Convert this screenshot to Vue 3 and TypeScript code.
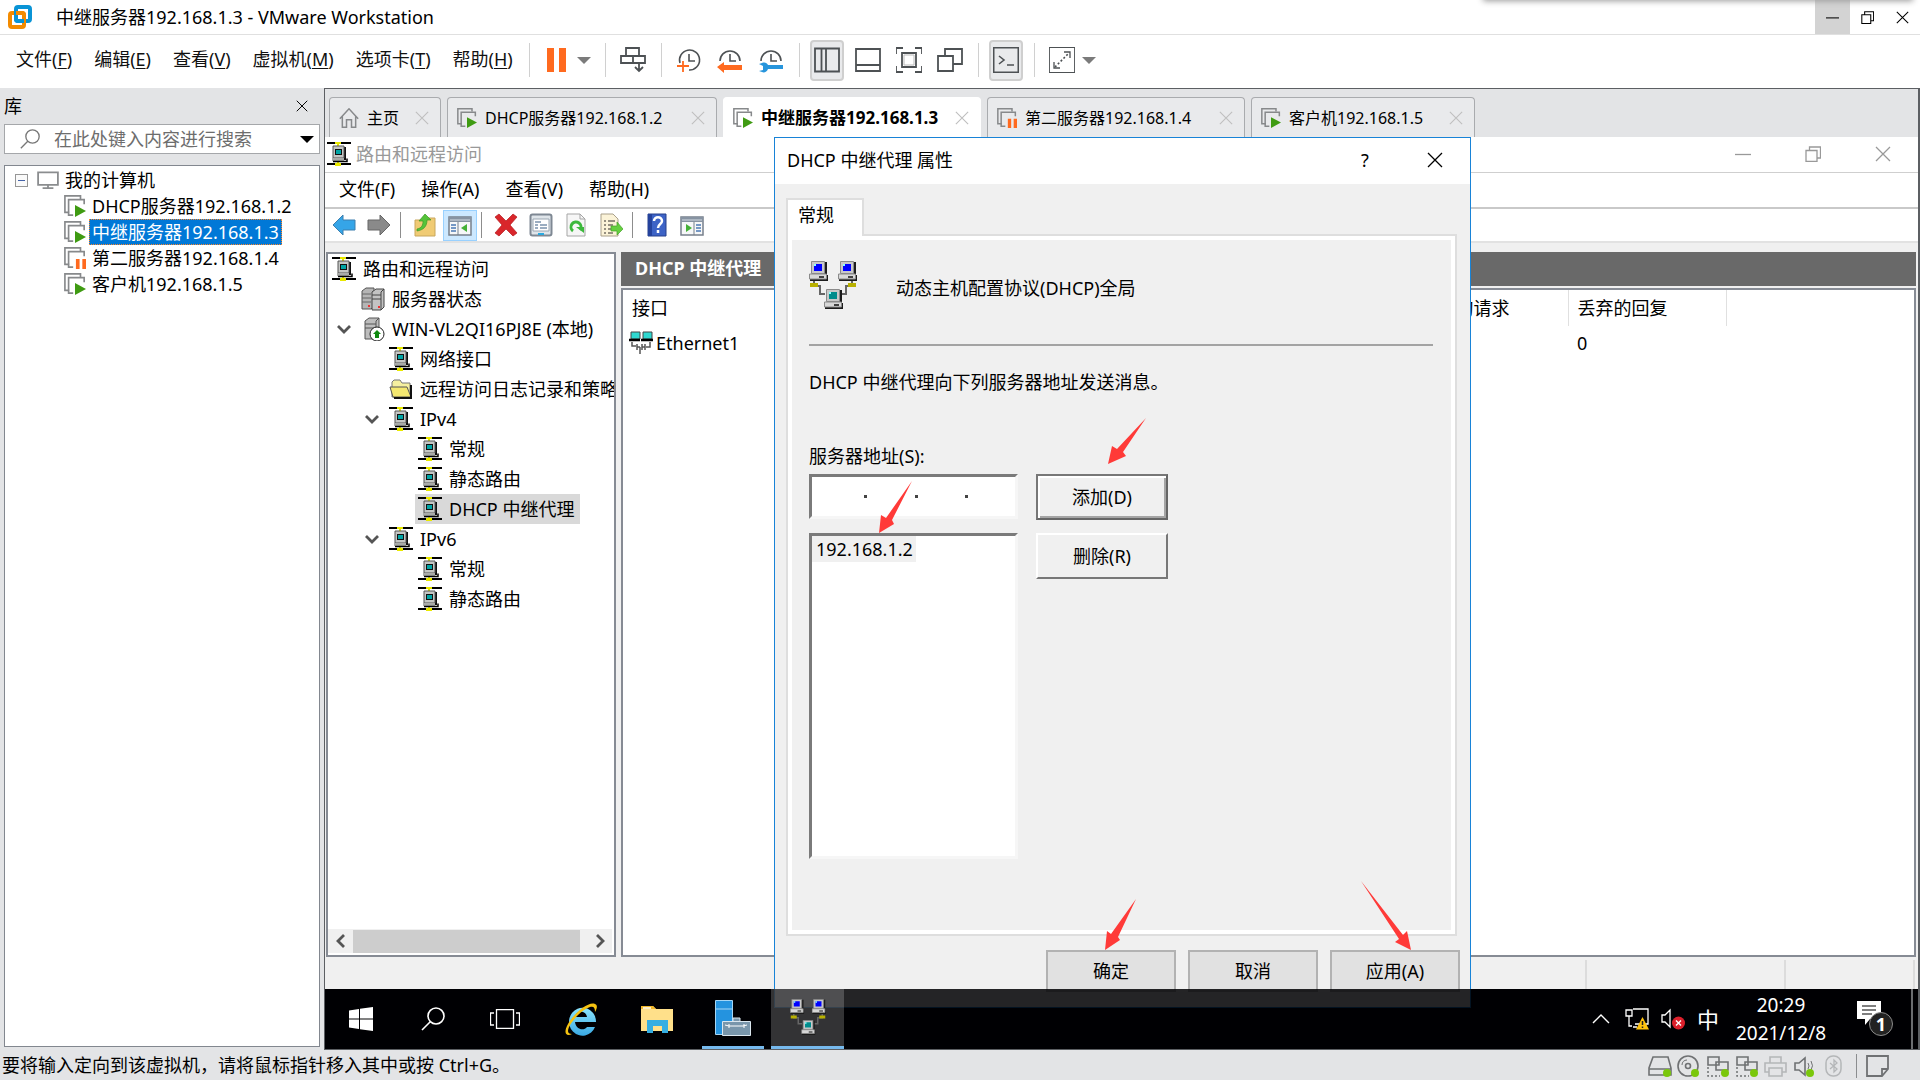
<script setup lang="ts">
interface MenuEntry { label: string; key: string }
interface MachineTab { name: string; icon: string; width: number; active?: boolean }
interface Machine { name: string; icon: string; selected?: boolean }
interface ConsoleNode { name: string; icon: string; level: number; open?: boolean; selected?: boolean }

const hostMenu: MenuEntry[] = [
  { label: '文件', key: 'F' },
  { label: '编辑', key: 'E' },
  { label: '查看', key: 'V' },
  { label: '虚拟机', key: 'M' },
  { label: '选项卡', key: 'T' },
  { label: '帮助', key: 'H' },
]

const hostTools: { icons: string[]; pressed?: string; caret?: boolean }[] = [
  { icons: ['pause'], caret: true },
  { icons: ['send-keys'] },
  { icons: ['snap-add', 'snap-back', 'snap-manage'] },
  { icons: ['view-side', 'view-bottom', 'view-fit', 'view-multi'], pressed: 'view-side' },
  { icons: ['console'], pressed: 'console' },
  { icons: ['stretch'], caret: true },
]

const machines: Machine[] = [
  { name: 'DHCP服务器192.168.1.2', icon: 'vm-on' },
  { name: '中继服务器192.168.1.3', icon: 'vm-on', selected: true },
  { name: '第二服务器192.168.1.4', icon: 'vm-paused' },
  { name: '客户机192.168.1.5', icon: 'vm-on' },
]

const tabs: MachineTab[] = [
  { name: '主页', icon: 'home', width: 112 },
  { name: 'DHCP服务器192.168.1.2', icon: 'vm-on', width: 270 },
  { name: '中继服务器192.168.1.3', icon: 'vm-on', width: 258, active: true },
  { name: '第二服务器192.168.1.4', icon: 'vm-paused', width: 258 },
  { name: '客户机192.168.1.5', icon: 'vm-on', width: 224 },
]

const guestMenu = ['文件(F)', '操作(A)', '查看(V)', '帮助(H)']

const guestTools: { icons: string[]; pressed?: string }[] = [
  { icons: ['back', 'forward'] },
  { icons: ['folder-up', 'pane-tree'], pressed: 'pane-tree' },
  { icons: ['delete', 'properties', 'refresh', 'export'] },
  { icons: ['help', 'pane-action'] },
]

const nodes: ConsoleNode[] = [
  { name: '路由和远程访问', icon: 'rras', level: 0 },
  { name: '服务器状态', icon: 'servers', level: 1 },
  { name: 'WIN-VL2QI16PJ8E (本地)', icon: 'server-up', level: 1, open: true },
  { name: '网络接口', icon: 'rras', level: 2 },
  { name: '远程访问日志记录和策略', icon: 'folder', level: 2 },
  { name: 'IPv4', icon: 'rras', level: 2, open: true },
  { name: '常规', icon: 'rras', level: 3 },
  { name: '静态路由', icon: 'rras', level: 3 },
  { name: 'DHCP 中继代理', icon: 'rras', level: 3, selected: true },
  { name: 'IPv6', icon: 'rras', level: 2, open: true },
  { name: '常规', icon: 'rras', level: 3 },
  { name: '静态路由', icon: 'rras', level: 3 },
]

const devices = ['disk', 'cd', 'net', 'net', 'printer', 'sound', 'bluetooth']
</script>

<template>
  <div class="app">
    <svg class="defs" aria-hidden="true">
      <symbol id="logo" viewBox="0 0 24 24">
        <rect x="8" y="2" width="14" height="14" rx="2" fill="none" stroke="#0a94d6" stroke-width="4" />
        <rect x="2" y="8" width="14" height="14" rx="2" fill="none" stroke="#f38b00" stroke-width="4" />
        <path d="M8 6v8q0 2 2 2h6" fill="none" stroke="#0a94d6" stroke-width="4" />
        <path d="M8 8h6q2 0 2 2v2" fill="none" stroke="#f38b00" stroke-width="4" />
      </symbol>
      <symbol id="x" viewBox="0 0 16 16"><path d="M1 1l14 14M15 1L1 15" fill="none" stroke="currentColor" stroke-width="1.3" /></symbol>
      <symbol id="min" viewBox="0 0 16 16"><path d="M0 8.5h16" stroke="currentColor" stroke-width="1.3" /></symbol>
      <symbol id="restore" viewBox="0 0 16 16"><path d="M1 4.5h11v11H1zM4.5 4.5V1h11v11H12" fill="none" stroke="currentColor" stroke-width="1.3" /></symbol>
      <symbol id="pause" viewBox="0 0 26 26"><path d="M3 1h7v24H3zM15 1h7v24h-7z" fill="#ff6a1f" /></symbol>
      <symbol id="send-keys" viewBox="0 0 26 26"><path d="M6 1h13v8H6zM1 9h12v7H1zM13 9h12v7H13zM19 16v8M15 20l4 4 4-4" fill="none" stroke="#4d5154" stroke-width="1.8" /></symbol>
      <symbol id="clock" viewBox="0 0 26 26"><path d="M4 16a10 10 0 1 1 9 7M13 7v7h6" fill="none" stroke="#4d5154" stroke-width="1.6" /></symbol>
      <symbol id="snap-add" viewBox="0 0 26 26"><use href="#clock" /><path d="M1 19h12M7 14v11" stroke="#ff6a1f" stroke-width="1.8" /></symbol>
      <symbol id="snap-back" viewBox="0 0 26 26"><path d="M3 14a10 10 0 1 1 20 0M13 7v7h6" fill="none" stroke="#4d5154" stroke-width="1.6" /><path d="M0 20l7-5v3h18v5H7v3z" fill="#ff6a1f" /></symbol>
      <symbol id="snap-manage" viewBox="0 0 26 26"><path d="M3 14a10 10 0 1 1 20 0M13 7v7h6" fill="none" stroke="#4d5154" stroke-width="1.6" /><path d="M1 17l3-1c3-1 5 0 6 2h15v4H10c-1 3-4 4-6 3l-3-1 4-1v-4z" fill="#2795dc" /></symbol>
      <symbol id="view-side" viewBox="0 0 26 26"><path d="M1 1.5h24v23H1zM7.5 1v24M12 1v24" fill="none" stroke="#4d5154" stroke-width="1.8" /></symbol>
      <symbol id="view-bottom" viewBox="0 0 26 26"><path d="M1 2h24v22H1zM1 18h24" fill="none" stroke="#4d5154" stroke-width="1.8" /></symbol>
      <symbol id="view-fit" viewBox="0 0 26 26"><path d="M0 7V1h7M19 1h7v6M26 19v6h-7M7 25H0v-6M6 6h14v14H6z" fill="none" stroke="#4d5154" stroke-width="1.8" /><path d="M8 8h10v10H8z" fill="#fff" stroke="#bbb" /></symbol>
      <symbol id="view-multi" viewBox="0 0 26 26"><path d="M1 9h15v15H1zM8 9V2h17v15h-9" fill="none" stroke="#4d5154" stroke-width="1.8" /></symbol>
      <symbol id="console" viewBox="0 0 26 26"><path d="M0 0h26v26H0z" fill="none" stroke="#4d5154" stroke-width="3" /><path d="M6 9l5 4-5 4M14 18h7" fill="none" stroke="#4d5154" stroke-width="1.6" /></symbol>
      <symbol id="stretch" viewBox="0 0 26 26"><path d="M0 0h26v26H0z" fill="none" stroke="#4d5154" stroke-width="1.8" /><path d="M15 5h6v6M11 21H5v-6" fill="none" stroke="#4d5154" stroke-width="1.3" /><path d="M6 20L20 6" stroke="#4d5154" stroke-width="1.6" stroke-dasharray="2 2" /></symbol>
      <symbol id="search" viewBox="0 0 24 24"><path d="M15 1a8 8 0 1 1 0 16a8 8 0 1 1 0-16M9 15L1 23" fill="none" stroke="currentColor" stroke-width="1.6" /></symbol>
      <symbol id="monitor" viewBox="0 0 24 20"><path d="M1 1.5h22v14H1zM12 16v3M6 19h12" fill="none" stroke="#8b8d8f" stroke-width="2" /></symbol>
      <symbol id="vm" viewBox="0 0 24 24"><path d="M6 19H1V1h17v3M10 22H5V5h17v5" fill="none" stroke="#87898b" stroke-width="1.8" /></symbol>
      <symbol id="vm-on" viewBox="0 0 24 24"><use href="#vm" /><path d="M12 11l12 6.5L12 24z" fill="#3f9b12" /></symbol>
      <symbol id="vm-paused" viewBox="0 0 24 24"><use href="#vm" /><path d="M13 13h4v11h-4zM20 13h4v11h-4z" fill="#ff6a1f" /></symbol>
      <symbol id="home" viewBox="0 0 24 24"><path d="M1 13L12 1l11 12M4 10v13h5v-9h6v9h5V10" fill="none" stroke="#87898b" stroke-width="1.8" /></symbol>

      <symbol id="rras" viewBox="0 0 24 24">
        <path d="M0 1h24M0 22h24" stroke="#000" stroke-width="2" />
        <path d="M8 0h6v2h-2v3h-2V2H8zM8 24h6v-3h-2v-2h-2v2H8z" fill="#e8e800" />
        <path d="M8 5h11v13H8z" fill="#111" />
        <path d="M6 4h11v12H6z" fill="#c4c6c4" stroke="#555" />
        <path d="M8 7h7v6H8z" fill="#111" /><path d="M9 8h5v4H9z" fill="#00a4a4" />
        <path d="M5 16h12v3H5z" fill="#a9aba9" /><path d="M6 19.5h14v-3" fill="none" stroke="#000" stroke-width="1.5" />
      </symbol>
      <symbol id="servers" viewBox="0 0 24 24">
        <path d="M1 4l4-3h8v18l-3 3H1z" fill="#b5b5b5" stroke="#555" /><path d="M1 7h9M1 11h9M1 15h9" stroke="#666" />
        <path d="M11 5l4-3h8v18l-3 3h-9z" fill="#c3c3c3" stroke="#444" /><path d="M11 8h9M11 12h9M20 5v18M20 5l3-3" stroke="#444" /><path d="M17 19h2v2h-2zM7 18h2v2H7z" fill="#e33" />
      </symbol>
      <symbol id="server-up" viewBox="0 0 24 24">
        <path d="M4 4l4-3h10v18l-3 3H4z" fill="#bdbdbd" stroke="#555" /><path d="M4 7h11M4 11h11M15 4v10M15 4l3-3" stroke="#555" />
        <circle cx="16" cy="17" r="7" fill="#fff" stroke="#222" /><path d="M16 13l4 4h-2v4h-4v-4h-2z" fill="#108a10" />
      </symbol>
      <symbol id="folder" viewBox="0 0 24 24"><path d="M3 20V5l2-2h6l2 3h8v14z" fill="#f5f0a0" stroke="#777" /><path d="M1 10h17l4 10H4z" fill="#f4e870" stroke="#555" /><path d="M22 8v13H5" fill="none" stroke="#111" stroke-width="2" /></symbol>
      <symbol id="nic" viewBox="0 0 24 24"><path d="M2 1h9v7H2zM14 1h9v7h-9z" fill="#2fd8d0" stroke="#444" /><path d="M0 9h11M12 9h12" stroke="#000" stroke-width="2.5" /><path d="M3 11v4h4M21 11v5h-4M8 13v6M8 16h3M13 13v6M16 13v6M11 16v7M13 16h3" fill="none" stroke="#555" stroke-width="1.5" /></symbol>
      <symbol id="back" viewBox="0 0 24 24"><path d="M1 12L11 2v5h12v10H11v5z" fill="#35a5e8" stroke="#3d7fae" /></symbol>
      <symbol id="forward" viewBox="0 0 24 24"><path d="M23 12L13 2v5H1v10h12v5z" fill="#8a8a8a" stroke="#666" /></symbol>
      <symbol id="folder-up" viewBox="0 0 24 24"><path d="M2 7h8l2-2h10v18H2z" fill="#f0cb74" stroke="#c9a75c" /><path d="M4 16c5-1 6-4 6-8H6l6-7 6 6h-4c0 7-4 10-10 11z" fill="#55c33a" stroke="#3a9a24" stroke-width=".7" /></symbol>
      <symbol id="pane" viewBox="0 0 24 24"><path d="M1 4h22v18H1z" fill="#f6f7f8" stroke="#77808c" stroke-width="1.5" /><path d="M1 4h22v5H1z" fill="#8793a2" /><path d="M2 7h20" stroke="#d5dce4" /></symbol>
      <symbol id="pane-tree" viewBox="0 0 24 24"><use href="#pane" /><path d="M10 9v13" stroke="#77808c" /><path d="M3 12h5M3 15h5M3 18h5" stroke="#4b79b4" stroke-width="1.5" /><path d="M19 11v8l-6-4z" fill="#44b036" /></symbol>
      <symbol id="pane-action" viewBox="0 0 24 24"><use href="#pane" /><path d="M14 9v13" stroke="#77808c" /><path d="M16 12h5M16 15h5M16 18h5" stroke="#4b79b4" stroke-width="1.5" /><path d="M6 11v8l6-4z" fill="#44b036" /></symbol>
      <symbol id="delete" viewBox="0 0 24 24"><path d="M1 4l4-3 7 7 7-7 4 3-7 8 7 8-4 3-7-7-7 7-4-3 7-8z" fill="#d9262b" stroke="#b3181c" stroke-width=".7" /></symbol>
      <symbol id="properties" viewBox="0 0 24 24"><rect x="1.5" y="1.5" width="21" height="21" rx="2" fill="#dfe5ea" stroke="#7e8893" stroke-width="2" /><path d="M4 6h16v12H4z" fill="#fff" stroke="#9aa6b2" /><path d="M6 9h6M6 12h3M11 12h7M6 15h3M11 15h7" stroke="#7b93ad" stroke-width="1.5" /><path d="M9 21h6" stroke="#29a9e0" stroke-width="2" /></symbol>
      <symbol id="refresh" viewBox="0 0 24 24"><path d="M3 1h13l5 5v17H3z" fill="#f6f6f6" stroke="#a5a5a5" /><path d="M16 1v5h5" fill="none" stroke="#a5a5a5" /><path d="M9 18a5 5 0 1 1 7-1" fill="none" stroke="#3cb83c" stroke-width="3" /><path d="M12 14h8v6z" fill="#3cb83c" /></symbol>
      <symbol id="export" viewBox="0 0 24 24"><path d="M2 1h12l5 5v17H2z" fill="#fbf3d8" stroke="#a9a08a" /><path d="M5 8h2M9 8h7M5 12h2M9 12h5M5 16h2M9 16h5M5 20h2M9 20h5" stroke="#767064" stroke-width="1.5" /><path d="M12 13h6v-4l6 7-6 6v-4h-6z" fill="#65cf3f" stroke="#45a02a" stroke-width=".7" /></symbol>
      <symbol id="help" viewBox="0 0 24 24"><path d="M3 1h18v22H3z" fill="#3d63c6" stroke="#27408c" /><path d="M3 1h4v22H3z" fill="#24429c" /><path d="M9 8c0-5 8-5 8 0 0 3-4 3-4 7M13 17v3" fill="none" stroke="#fff" stroke-width="2.5" /></symbol>
      <symbol id="chevron" viewBox="0 0 14 10"><path d="M1 2l6 6 6-6" fill="none" stroke="#555" stroke-width="2.8" /></symbol>
      <symbol id="tray-up" viewBox="0 0 18 12"><path d="M1 10l8-8 8 8" fill="none" stroke="#fff" stroke-width="1.4" /></symbol>

      <symbol id="pc" viewBox="0 0 19 20">
        <path d="M4 1h14v13H4z" fill="#1c1c1c" /><path d="M2.500 .5h13v12h-13z" fill="#c9c9c9" stroke="#8a8a8a" />
        <path d="M1 14h18v6H1z" fill="#1c1c1c" /><path d="M.5 13h17v5H.5z" fill="#d8d8d8" stroke="#8a8a8a" /><path d="M10 16h5" stroke="#111" stroke-width="1.5" />
      </symbol>
      <symbol id="dhcp" viewBox="0 0 48 48">
        <path d="M5 20v5h6v8h5M43 20v5h-6v8h-5" fill="none" stroke="#666" stroke-width="2" />
        <path d="M1 22h8v4H1zM39 22h8v4h-8z" fill="#b8b000" />
        <use href="#pc" x="0" y="0" width="19" height="20" /><use href="#pc" x="29" y="0" width="19" height="20" /><use href="#pc" x="15" y="28" width="19" height="20" />
        <path d="M5 3h8v7H5zM34 3h8v7h-8z" fill="#00f" /><path d="M20 31h8v7h-8z" fill="#008c8c" /><path d="M5 3h2v2H5zM34 3h2v2h-2zM20 31h2v2h-2z" fill="#8ff" />
      </symbol>
      <symbol id="windows" viewBox="0 0 24 24"><path d="M0 3.5L10 2v9.5H0zM11 1.8L24 0v11.5H11zM0 12.5h10V22L0 20.5zM11 12.5h13V24l-13-1.8z" fill="#fff" /></symbol>
      <symbol id="task-view" viewBox="0 0 30 20"><path d="M6.5 .5h17v19h-17zM4 4H.5v12H4M26 4h3.5v12H26" fill="none" stroke="#fff" stroke-width="1.3" /></symbol>
      <symbol id="ie" viewBox="0 0 34 34">
        <defs><linearGradient id="ieb" x2="0" y2="1"><stop offset="0" stop-color="#8ce4fc" /><stop offset="1" stop-color="#3aa9e4" /></linearGradient></defs>
        <path d="M11 20h21a13.5 14 0 1 0-1 5h-8c-3 4-11 3-12-5zM11 15c1-7 11-7 12 0z" fill="url(#ieb)" fill-rule="evenodd" />
        <path d="M8 32C2 35-1 31 4 22 10 11 25-1 31 2c3 1 2 5 0 8 0-4-1-6-5-5C19 7 9 17 5 25c-2 5-1 7 3 7z" fill="#f5c211" />
      </symbol>
      <symbol id="explorer" viewBox="0 0 34 28"><path d="M1 1h12l3 3h17v22H1z" fill="#ffe08a" /><path d="M1 1h12l3 3H1z" fill="#f2b92c" /><path d="M3 3h8" stroke="#fff" stroke-width="1.5" /><path d="M7 28V15h21v13h-6v-7h-9v7z" fill="#35aee2" /></symbol>
      <symbol id="server-manager" viewBox="0 0 36 36"><path d="M.5 .5h17v34H.5z" fill="#2493df" stroke="#a5d6f5" /><path d="M1 9h16" stroke="#a5d6f5" /><path d="M18 21v-3h7v3M7.5 21.5h28v14h-28z" fill="#7996ab" stroke="#dbe7ef" /><path d="M10 25l4 1h14l4-1M14 24v4M29 24v4" fill="none" stroke="#fff" /></symbol>
      <symbol id="tray-net" viewBox="0 0 24 22"><path d="M8 1h15v15H10M1 2h6v6H1zM4 8v10h3M12 19H8" fill="none" stroke="#fff" stroke-width="1.3" /><path d="M17.5 9L24 21.5H11z" fill="#ffc20e" /><path d="M17.5 13v4M17.5 18.5v1.5" stroke="#222" stroke-width="1.5" /></symbol>
      <symbol id="tray-sound" viewBox="0 0 24 22"><path d="M1 7h3l5-5v17l-5-5H1z" fill="none" stroke="#fff" stroke-width="1.3" /><circle cx="17.5" cy="15" r="6.5" fill="#dc1f2b" /><path d="M15 12.5l5 5M20 12.5l-5 5" stroke="#fff" stroke-width="1.4" /></symbol>
      <symbol id="notice" viewBox="0 0 26 26"><path d="M0 0h24v18H13l-5 6v-6H0z" fill="#fff" /><path d="M5 5h14M5 9h14M5 13h10" stroke="#000" stroke-width="1.2" /></symbol>

      <symbol id="disk" viewBox="0 0 24 22"><path d="M5 2h15l3 11v7H1v-7zM1 14h22" fill="none" stroke="#6f7173" stroke-width="1.6" /><circle cx="19" cy="18" r="4" fill="#7ac70c" /></symbol>
      <symbol id="cd" viewBox="0 0 24 22"><circle cx="11" cy="11" r="10" fill="none" stroke="#6f7173" stroke-width="1.6" /><circle cx="11" cy="11" r="2.5" fill="none" stroke="#6f7173" stroke-width="1.6" /><path d="M5 10c0-3 2-5 5-5" fill="none" stroke="#6f7173" /><circle cx="18" cy="18" r="4" fill="#7ac70c" /></symbol>
      <symbol id="net" viewBox="0 0 24 22"><path d="M2 2h11v8H2zM10 7h12v8H10z" fill="#e3e4e6" stroke="#6f7173" stroke-width="1.6" /><path d="M2 12v9h12" fill="none" stroke="#6f7173" stroke-width="1.5" stroke-dasharray="2 2" /><circle cx="19" cy="18" r="4" fill="#7ac70c" /></symbol>
      <symbol id="printer" viewBox="0 0 24 22"><path d="M6 8V2h11v6M5 17H1V8h21v9h-4M5 13h13v8H5z" fill="none" stroke="#b4b6b8" stroke-width="1.6" /></symbol>
      <symbol id="sound" viewBox="0 0 24 22"><path d="M2 8h4l6-5v17l-6-5H2z" fill="none" stroke="#6f7173" stroke-width="1.6" /><path d="M15 8q2 3 0 6M18 6q3 5 0 9" fill="none" stroke="#6f7173" /><circle cx="17" cy="18" r="4" fill="#7ac70c" /></symbol>
      <symbol id="bluetooth" viewBox="0 0 24 22"><rect x="4" y="1" width="15" height="20" rx="7" fill="none" stroke="#b4b6b8" stroke-width="1.5" /><path d="M8 8l7 6-3 3V5l3 3-7 6" fill="none" stroke="#b4b6b8" stroke-width="1.3" /></symbol>
      <symbol id="note" viewBox="0 0 24 22"><path d="M1 1h21v13l-6 7H1zM22 14h-6v7" fill="none" stroke="#6f7173" stroke-width="1.8" /></symbol>
    </svg>

    <header class="title-bar">
      <svg class="logo"><use href="#logo" /></svg>
      <h1>中继服务器192.168.1.3 - VMware Workstation</h1>
      <div class="window-buttons">
        <button class="hot" aria-label="最小化"><svg><use href="#min" /></svg></button>
        <button aria-label="还原"><svg><use href="#restore" /></svg></button>
        <button aria-label="关闭"><svg><use href="#x" /></svg></button>
      </div>
      <div class="top-shadow"></div>
    </header>

    <div class="menu-bar">
      <nav>
        <button v-for="m in hostMenu" :key="m.key">{{ m.label }}(<u>{{ m.key }}</u>)</button>
      </nav>
      <div v-for="(g, i) in hostTools" :key="i" class="tool-group">
        <button v-for="icon in g.icons" :key="icon" class="tool" :class="{ pressed: g.pressed === icon }" :aria-label="icon">
          <svg><use :href="'#' + icon" /></svg>
        </button>
        <button v-if="g.caret" class="drop" aria-label="更多"><i class="caret"></i></button>
      </div>
    </div>

    <div class="workspace">
      <aside class="library">
        <div class="library-head">
          <h2>库</h2>
          <button aria-label="关闭库"><svg><use href="#x" /></svg></button>
        </div>
        <div class="search">
          <svg><use href="#search" /></svg>
          <input type="text" placeholder="在此处键入内容进行搜索" aria-label="搜索" />
          <button aria-label="搜索选项"><i class="caret"></i></button>
        </div>
        <div class="machine-tree">
          <div class="root">
            <i class="expander"></i>
            <svg><use href="#monitor" /></svg>
            <span>我的计算机</span>
          </div>
          <ul>
            <li v-for="m in machines" :key="m.name">
              <svg><use :href="'#' + m.icon" /></svg>
              <span :class="{ selected: m.selected }">{{ m.name }}</span>
            </li>
          </ul>
        </div>
      </aside>

      <main class="viewer">
        <div class="tabs">
          <div v-for="t in tabs" :key="t.name" class="tab" :class="{ active: t.active }" :style="{ width: t.width + 'px' }">
            <svg class="tab-icon"><use :href="'#' + t.icon" /></svg>
            <span>{{ t.name }}</span>
            <button aria-label="关闭选项卡"><svg><use href="#x" /></svg></button>
          </div>
        </div>

        <div class="guest">
          <section class="console">
            <header class="console-title">
              <svg><use href="#rras" /></svg>
              <h2>路由和远程访问</h2>
              <div class="console-buttons">
                <button aria-label="最小化"><svg><use href="#min" /></svg></button>
                <button aria-label="还原"><svg><use href="#restore" /></svg></button>
                <button aria-label="关闭"><svg><use href="#x" /></svg></button>
              </div>
            </header>
            <nav class="console-menu">
              <button v-for="m in guestMenu" :key="m">{{ m }}</button>
            </nav>
            <div class="console-tools">
              <div v-for="(g, i) in guestTools" :key="i" class="console-group">
                <button v-for="icon in g.icons" :key="icon" :class="{ pressed: g.pressed === icon }" :aria-label="icon">
                  <svg><use :href="'#' + icon" /></svg>
                </button>
              </div>
            </div>
            <div class="console-body">
              <div class="tree-pane">
                <ul>
                  <li v-for="(n, i) in nodes" :key="i" :class="'level-' + n.level">
                    <svg v-if="n.open" class="chevron"><use href="#chevron" /></svg>
                    <span class="node" :class="{ selected: n.selected }">
                      <svg><use :href="'#' + n.icon" /></svg>
                      <span>{{ n.name }}</span>
                    </span>
                  </li>
                </ul>
                <div class="scroll-bar">
                  <button class="to-left" aria-label="向左滚动"><svg><use href="#chevron" /></svg></button>
                  <div class="thumb"></div>
                  <button class="to-right" aria-label="向右滚动"><svg><use href="#chevron" /></svg></button>
                </div>
              </div>
              <div class="detail-pane">
                <h3>DHCP 中继代理</h3>
                <div class="detail-box">
                  <table>
                    <colgroup><col class="c-name" /><col class="c-wide" /><col class="c-data" /><col class="c-data" /><col /></colgroup>
                    <thead><tr><th>接口</th><th></th><th>丢弃的请求</th><th>丢弃的回复</th><th></th></tr></thead>
                    <tbody>
                      <tr><td><svg><use href="#nic" /></svg>Ethernet1</td><td></td><td></td><td>0</td><td></td></tr>
                    </tbody>
                  </table>
                </div>
              </div>
            </div>
            <footer class="console-status"><i></i><i></i><i></i></footer>
          </section>

          <section class="dialog" role="dialog" aria-labelledby="dialog-title">
            <header>
              <h2 id="dialog-title">DHCP 中继代理 属性</h2>
              <button aria-label="帮助">?</button>
              <button aria-label="关闭"><svg><use href="#x" /></svg></button>
            </header>
            <button class="sheet-tab">常规</button>
            <div class="sheet">
              <div class="intro">
                <svg><use href="#dhcp" /></svg>
                <p>动态主机配置协议(DHCP)全局</p>
              </div>
              <p class="hint">DHCP 中继代理向下列服务器地址发送消息。</p>
              <label for="octet-1">服务器地址(S):</label>
              <div class="row">
                <div class="ip-field">
                  <input id="octet-1" type="text" maxlength="3" /><b></b>
                  <input type="text" maxlength="3" aria-label="第二段" /><b></b>
                  <input type="text" maxlength="3" aria-label="第三段" /><b></b>
                  <input type="text" maxlength="3" aria-label="第四段" />
                </div>
                <button class="classic default">添加(D)</button>
              </div>
              <div class="row">
                <ul class="address-list"><li>192.168.1.2</li></ul>
                <button class="classic">删除(R)</button>
              </div>
            </div>
            <footer>
              <button>确定</button>
              <button>取消</button>
              <button>应用(A)</button>
            </footer>
          </section>

          <svg class="arrows" viewBox="0 0 700 900" aria-hidden="true">
            <g fill="#ff3a38">
              <path d="M334 327L338 309L343 312L372 281L349 315L352 319Z" />
              <path d="M105 396L107 378L112 381L138 344L118 383L120 387Z" />
              <path d="M331 813L333 794L337 797L362 762L344 800L346 803Z" />
              <path d="M637 813L633 794L629 798L587 744L625 802L621 805Z" />
            </g>
          </svg>

          <footer class="taskbar">
            <button aria-label="开始"><svg class="s24"><use href="#windows" /></svg></button>
            <button aria-label="搜索"><svg class="s24"><use href="#search" /></svg></button>
            <button aria-label="任务视图"><svg class="s-view"><use href="#task-view" /></svg></button>
            <div class="apps">
              <button aria-label="Internet Explorer"><svg class="s34"><use href="#ie" /></svg></button>
              <button aria-label="文件资源管理器"><svg class="s34"><use href="#explorer" /></svg></button>
              <button class="running" aria-label="服务器管理器"><svg class="s36"><use href="#server-manager" /></svg></button>
              <button class="current" aria-label="路由和远程访问"><svg class="s36"><use href="#dhcp" /></svg></button>
            </div>
            <div class="tray">
              <svg class="tray-up"><use href="#tray-up" /></svg>
              <svg class="tray-icon"><use href="#tray-net" /></svg>
              <svg class="tray-icon"><use href="#tray-sound" /></svg>
              <span class="ime">中</span>
              <time><span>20:29</span><span>2021/12/8</span></time>
              <div class="notice"><svg><use href="#notice" /></svg><b>1</b></div>
            </div>
          </footer>
        </div>
      </main>
    </div>

    <footer class="status-bar">
      <span>要将输入定向到该虚拟机，请将鼠标指针移入其中或按 Ctrl+G。</span>
      <div class="devices">
        <svg v-for="(d, i) in devices" :key="i"><use :href="'#' + d" /></svg>
        <i></i>
        <svg><use href="#note" /></svg>
      </div>
    </footer>
  </div>
</template>

<style>
body {
  background: #e3e4e6;
}
</style>

<style scoped>
* {
  box-sizing: border-box;
}
.app {
  display: flex;
  flex-direction: column;
  min-height: 100vh;
  font: 18px/24px "Noto Sans", "Noto Sans CJK SC", sans-serif;
  color: #000;
  overflow: hidden;
}
.defs {
  position: absolute;
  width: 0;
  height: 0;
}
h1, h2, h3, p, ul {
  margin: 0;
  padding: 0;
  font-size: inherit;
  font-weight: 400;
  list-style: none;
}
button {
  padding: 0;
  border: 0;
  background: none;
  font: inherit;
  color: inherit;
  display: flex;
  align-items: center;
  justify-content: center;
  white-space: nowrap;
  flex: none;
}
svg {
  display: block;
  flex: none;
  overflow: visible;
}
.caret {
  border: 7px solid transparent;
  border-top-color: currentColor;
  border-bottom: 0;
}

/* host window frame */
.title-bar {
  position: relative;
  display: flex;
  align-items: center;
  height: 34px;
  padding-left: 8px;
  gap: 24px;
  background: #fff;
}
.logo {
  width: 24px;
  height: 24px;
}
.title-bar h1 {
  flex: 1;
  line-height: 34px;
}
.window-buttons {
  display: flex;
  height: 34px;
}
.window-buttons button {
  width: 35px;
}
.window-buttons svg {
  width: 13px;
  height: 13px;
}
.window-buttons .hot {
  background: #d3d3d3;
}
.top-shadow {
  position: absolute;
  top: -8px;
  right: 8px;
  width: 428px;
  height: 8px;
  box-shadow: 0 0 6px 1px #999;
}
.menu-bar {
  display: flex;
  align-items: center;
  height: 54px;
  padding-bottom: 3px;
  border-top: 1px solid #e0e0e0;
  background: #fff;
  color: #111;
}
.menu-bar nav {
  display: flex;
  gap: 22px;
  width: 529px;
  padding: 0 0 2px 16px;
}
.menu-bar u {
  text-underline-offset: 2px;
}
.tool-group {
  display: flex;
  align-items: center;
  gap: 7px;
  height: 34px;
  padding: 0 11px 0 10px;
  border-left: 1px solid #d0d0d0;
}
.tool {
  width: 34px;
  height: 41px;
}
.tool svg {
  width: 26px;
  height: 26px;
}
.tool.pressed {
  border: 2px solid #cfcfcf;
  border-radius: 4px;
  background: #e9eaec;
}
.drop {
  width: 20px;
  height: 34px;
  margin-left: -7px;
  color: #7b7b7b;
}
.workspace {
  display: flex;
  flex: 1;
  background: #e3e4e6;
}

/* library */
.library {
  display: flex;
  flex-direction: column;
  width: 324px;
  padding: 0 4px 3px;
}
.library-head {
  display: flex;
  align-items: center;
  justify-content: space-between;
  height: 36px;
  padding-right: 12px;
}
.library-head svg {
  width: 12px;
  height: 12px;
}
.search {
  display: flex;
  align-items: center;
  height: 30px;
  margin-bottom: 11px;
  border: 1px solid #a5a7aa;
  background: #fff;
}
.search svg {
  width: 20px;
  height: 20px;
  margin: 0 14px 0 15px;
  color: #777;
}
.search input {
  flex: 1;
  min-width: 0;
  padding: 0;
  border: 0;
  background: none;
  font: inherit;
  outline: 0;
}
.search input::placeholder {
  color: #6d6d6d;
  opacity: 1;
}
.search button {
  width: 24px;
}
.machine-tree {
  flex: 1;
  padding: 1px 0 0 10px;
  border: 1px solid #82878f;
  background: #fff;
}
.machine-tree .root {
  display: flex;
  align-items: center;
  height: 26px;
}
.expander {
  display: flex;
  align-items: center;
  width: 13px;
  height: 13px;
  padding: 0 2px;
  border: 1px solid #969696;
  background: #fafafa;
}
.expander::before {
  content: "";
  width: 100%;
  height: 1px;
  background: #4463a8;
}
.root svg {
  width: 22px;
  height: 18px;
  margin: 0 6px 0 9px;
}
.machine-tree li {
  display: flex;
  align-items: center;
  height: 26px;
  padding-left: 49px;
  gap: 3px;
}
.machine-tree li svg {
  width: 22px;
  height: 22px;
}
.machine-tree li span {
  padding: 0 2px;
  border: 1px solid transparent;
}
.machine-tree .selected {
  background: #0078d7;
  border: 1px dotted #ff8728;
  color: #fff;
}

/* machine tabs */
.viewer {
  display: flex;
  flex-direction: column;
  flex: 1;
  min-width: 0;
  border: 1px solid #5c5f63;
  border-width: 1px 2px 1px 1px;
}
.tabs {
  display: flex;
  align-items: flex-end;
  gap: 6px;
  height: 48px;
  padding-left: 4px;
  font-size: 16px;
}
.tab {
  display: flex;
  align-items: center;
  height: 40px;
  padding: 0 11px 0 8px;
  border: 1px solid #a9abae;
  border-bottom: 0;
  border-radius: 4px 4px 0 0;
  background: #e9eaec;
  white-space: nowrap;
}
.tab.active {
  border-color: #fff;
  background: #fff;
  font-size: 17px;
  font-weight: 700;
}
.tab-icon {
  width: 22px;
  height: 20px;
  margin-right: 7px;
}
.tab button {
  margin-left: auto;
  color: #bfbfbf;
}
.tab button svg {
  width: 14px;
  height: 14px;
}

/* guest desktop */
.guest {
  position: relative;
  display: flex;
  flex-direction: column;
  flex: 1;
  background: #000207;
}
.console {
  display: flex;
  flex-direction: column;
  flex: 1;
  background: #f0f0f0;
}
.console-title {
  display: flex;
  align-items: center;
  height: 36px;
  padding: 0 0 2px 2px;
  gap: 5px;
  border-bottom: 1px solid #cfcfcf;
  background: #fff;
  color: #999;
}
.console-title > svg {
  width: 24px;
  height: 24px;
}
.console-title h2 {
  flex: 1;
}
.console-buttons {
  display: flex;
}
.console-buttons button {
  width: 70px;
}
.console-buttons svg {
  width: 16px;
  height: 16px;
}
.console-menu {
  display: flex;
  gap: 26px;
  height: 36px;
  padding: 0 0 2px 14px;
  border-bottom: 2px solid #c9c9c9;
  background: #fff;
}
.console-tools {
  display: flex;
  align-items: center;
  height: 34px;
  border-bottom: 2px solid #e2e2e2;
  background: #fff;
}
.console-group {
  display: flex;
  align-items: center;
  height: 26px;
  padding: 0 4px 0 2px;
  gap: 1px;
}
.console-group + .console-group {
  padding-left: 7px;
  border-left: 1px solid #8d8d8d;
}
.console-group button {
  width: 34px;
  height: 31px;
}
.console-group svg {
  width: 24px;
  height: 24px;
}
.console-group .pressed {
  border: 1px solid #99d1ff;
  background: #cce8ff;
}
.console-body {
  display: flex;
  flex: 1;
  gap: 5px;
  padding: 9px 2px 0 1px;
}
.tree-pane {
  display: flex;
  flex-direction: column;
  justify-content: space-between;
  width: 290px;
  border: 2px solid #868b94;
  background: #fff;
  overflow: hidden;
}
.tree-pane li {
  display: flex;
  align-items: center;
  height: 30px;
  white-space: nowrap;
}
.tree-pane li.level-0 { padding-left: 1px; }
.tree-pane li.level-1 { padding-left: 30px; }
.tree-pane li.level-2 { padding-left: 58px; }
.tree-pane li.level-3 { padding-left: 87px; }
.node {
  display: flex;
  align-items: center;
  flex: none;
  height: 30px;
  padding: 0 6px 0 3px;
  gap: 7px;
}
.node.selected {
  background: #d9d9d9;
}
.node svg {
  width: 24px;
  height: 24px;
}
.chevron {
  width: 14px;
  height: 10px;
  margin-left: -21px;
  margin-right: 7px;
}
.scroll-bar {
  display: flex;
  align-items: center;
  height: 24px;
  margin: 0 2px 2px 0;
  background: #f0f0f0;
}
.scroll-bar button {
  width: 25px;
}
.scroll-bar svg {
  width: 14px;
  height: 10px;
}
.to-left svg {
  transform: rotate(90deg);
}
.to-right svg {
  transform: rotate(-90deg);
}
.to-right {
  margin-left: auto;
}
.thumb {
  width: 227px;
  height: 23px;
  background: #cdcdcd;
}
.detail-pane {
  display: flex;
  flex-direction: column;
  flex: 1;
  min-width: 0;
}
.detail-pane h3 {
  height: 34px;
  padding-left: 14px;
  margin-bottom: 2px;
  background: #696969;
  color: #fff;
  font-weight: 700;
  line-height: 33px;
}
.detail-box {
  flex: 1;
  border: 2px solid #868b94;
  background: #fff;
}
table {
  width: 100%;
  table-layout: fixed;
  border-collapse: collapse;
}
.c-name { width: 157px; }
.c-wide { width: 630px; }
.c-data { width: 158px; }
th, td {
  height: 36px;
  padding: 0 9px;
  font-weight: 400;
  text-align: left;
  white-space: nowrap;
}
td {
  height: 34px;
}
th:not(:last-child) {
  border-right: 1px solid #e0e0e0;
}
td:first-child {
  display: flex;
  align-items: center;
  gap: 3px;
  padding-left: 6px;
}
td svg {
  width: 24px;
  height: 24px;
}
.console-status {
  display: flex;
  justify-content: flex-end;
  height: 32px;
  padding: 3px 3px 0 0;
}
.console-status i {
  width: 199px;
  border-right: 2px solid #dcdcdc;
}
.console-status i:last-child {
  width: 129px;
}

/* properties dialog */
.dialog {
  position: absolute;
  top: 0;
  left: 449px;
  width: 697px;
  height: 871px;
  border: 1px solid #1883d7;
  background: #f0f0f0;
}
.dialog header {
  display: flex;
  align-items: center;
  height: 46px;
  padding: 0 0 2px 12px;
  margin-bottom: 14px;
  background: #fff;
}
.dialog h2 {
  flex: 1;
}
.dialog header button {
  width: 70px;
}
.dialog header svg {
  width: 16px;
  height: 16px;
}
.sheet-tab {
  position: relative;
  z-index: 1;
  justify-content: flex-start;
  width: 78px;
  height: 38px;
  margin: 0 0 -2px 11px;
  padding: 0 0 6px 10px;
  border: 2px solid #dedede;
  border-bottom: 0;
  background: #fff;
}
.sheet {
  width: 671px;
  height: 702px;
  margin-left: 11px;
  padding: 18px 17px 0;
  border: 2px solid #dedede;
  box-shadow: inset 0 0 0 4px #fff;
}
.intro {
  display: flex;
  align-items: center;
  gap: 39px;
  height: 88px;
  padding-bottom: 32px;
  border-bottom: 2px solid #a3a3a3;
  margin: 4px 5px 24px 4px;
}
.intro p {
  padding-top: 6px;
}
.intro svg {
  width: 48px;
  height: 48px;
}
.sheet .hint {
  margin: 0 0 50px 4px;
}
.sheet label {
  display: block;
  margin: 0 0 6px 4px;
}
.row {
  display: flex;
  align-items: flex-start;
  gap: 18px;
  margin: 0 0 13px 4px;
}
.ip-field,
.address-list {
  width: 209px;
  border: 3px solid;
  border-color: #7a7a7a #f6f6f6 #f6f6f6 #7a7a7a;
  background: #fff;
}
.ip-field {
  display: flex;
  align-items: center;
  height: 45px;
  padding-left: 5px;
}
.ip-field input {
  width: 48px;
  min-width: 0;
  height: 32px;
  padding: 0;
  border: 0;
  background: none;
  font: inherit;
  text-align: center;
  outline: 0;
}
.ip-field b {
  width: 3px;
  height: 3px;
  flex: none;
  background: #444;
}
.address-list {
  height: 326px;
}
.address-list li {
  width: 104px;
  padding: 1px 4px;
  background: #f0f0f0;
}
.classic {
  width: 132px;
  height: 46px;
  border: 2px solid;
  border-color: #fff #777 #777 #fff;
}
.classic.default {
  border-color: #777 #666 #666 #777;
  box-shadow: inset 2px 2px #fff, inset -2px -2px #a5a5a5;
}
.dialog footer {
  display: flex;
  justify-content: flex-end;
  gap: 12px;
  padding: 14px 10px 0 0;
}
.dialog footer button {
  width: 130px;
  height: 42px;
  border: 2px solid #b2b2b2;
  background: #e1e1e1;
}
.arrows {
  position: absolute;
  top: 0;
  left: 449px;
  width: 700px;
  height: 900px;
}

/* guest taskbar */
.taskbar {
  position: relative;
  display: flex;
  height: 60px;
  background: rgba(0, 0, 2, 0.85);
  color: #fff;
}
.taskbar button {
  width: 72px;
}
.apps {
  display: flex;
  padding-left: 2px;
}
.taskbar .apps button {
  width: 62px;
  margin: 0 7px;
}
.taskbar .apps .running {
  border-bottom: 3px solid #76b9ed;
}
.taskbar .apps .current {
  width: 73px;
  margin: 0;
  padding-bottom: 1px;
  border-bottom: 3px solid #76b9ed;
  background: rgba(255, 255, 255, 0.2);
}
.s24 {
  width: 24px;
  height: 24px;
}
.s-view {
  width: 30px;
  height: 20px;
}
.s34 {
  width: 34px;
  height: 34px;
}
.s36 {
  width: 36px;
  height: 36px;
}
.tray {
  display: flex;
  align-items: center;
  margin-left: auto;
  margin-right: 5px;
  padding-right: 16px;
  border-right: 2px solid #6b6d70;
}
.tray-up {
  width: 18px;
  height: 12px;
  margin-right: 15px;
}
.tray-icon {
  width: 24px;
  height: 22px;
  margin-right: 12px;
}
.ime {
  width: 24px;
  margin-right: 11px;
  font-size: 22px;
}
.tray time {
  display: flex;
  flex-direction: column;
  align-items: center;
  width: 98px;
  margin-right: 27px;
  font-size: 19px;
  line-height: 28px;
}
.notice {
  position: relative;
  width: 38px;
  height: 36px;
}
.notice svg {
  width: 26px;
  height: 26px;
}
.notice b {
  position: absolute;
  left: 12px;
  top: 11px;
  width: 24px;
  height: 24px;
  border: 1px solid #8b8b8b;
  border-radius: 50%;
  background: #222;
  line-height: 22px;
  text-align: center;
}

/* host status bar */
.status-bar {
  display: flex;
  justify-content: space-between;
  height: 30px;
  padding: 3px 30px 0 2px;
  background: #e3e4e6;
}
.devices {
  display: flex;
  align-items: center;
  gap: 5px;
  padding-bottom: 2px;
}
.devices svg {
  width: 24px;
  height: 22px;
}
.devices i {
  width: 1px;
  height: 24px;
  margin: 0 4px 0 5px;
  background: #8b8d8f;
}
</style>
